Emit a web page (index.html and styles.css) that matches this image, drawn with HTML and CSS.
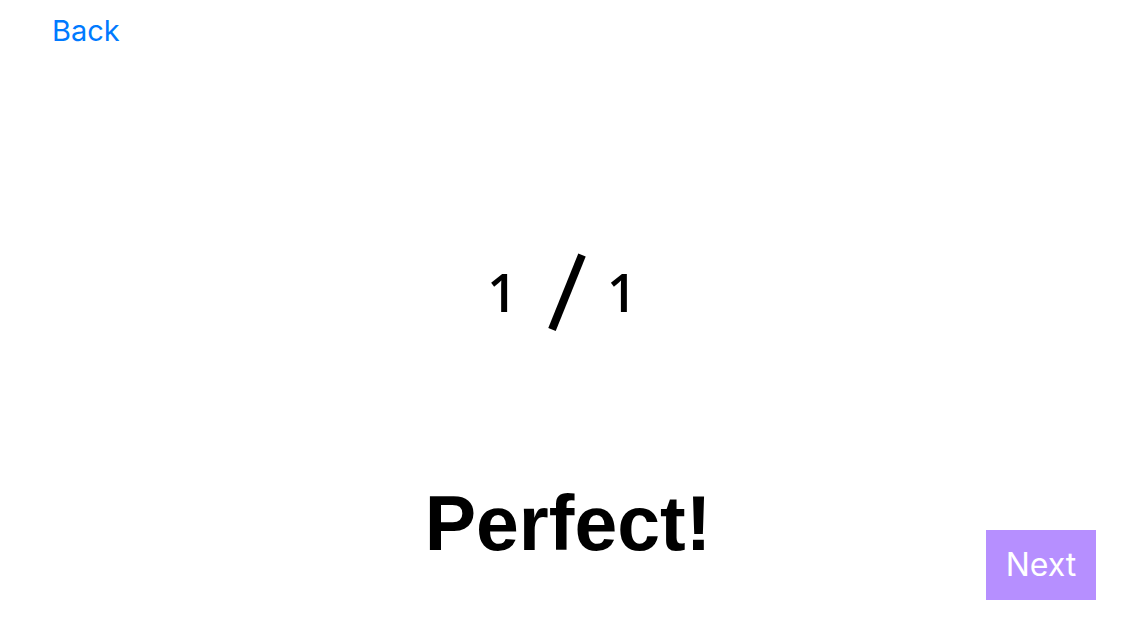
FILE: index.html
```html
<!DOCTYPE html>
<html lang="en">
<head>
<meta charset="utf-8">
<title>Result</title>
<link rel="stylesheet" href="styles.css">
</head>
<body>
<header class="bar"><button class="back" type="button">Back</button></header>
<main class="result">
<p class="score">
<span class="count">1</span>
<svg class="slash" viewBox="0 0 50 78" aria-hidden="true"><path d="M15 76.500 45 2" stroke="#000" stroke-width="8"/></svg>
<span class="count">1</span>
</p>
<h1 class="verdict">Perfect!</h1>
</main>
<footer class="actions"><button class="next" type="button">Next</button></footer>
</body>
</html>
```
FILE: styles.css
```css
* { box-sizing: border-box; }
body {
  margin: 0;
  min-height: 100vh;
  display: grid;
  grid-template-rows: auto 1fr auto;
  background: #fff;
  color: #000;
  font-family: Inter, "Liberation Sans", sans-serif;
}
button { border: 0; font-family: inherit; cursor: pointer; }
.bar { padding: 13px 52px; }
.back {
  padding: 0;
  background: none;
  color: #007aff;
  font-size: 29px;
  line-height: 36px;
}
.result {
  display: flex;
  flex-direction: column;
  align-items: center;
  justify-content: flex-end;
}
.score {
  display: flex;
  align-items: center;
  gap: 20px;
  margin: 0 12px 148px 0;
}
.count {
  font-family: "Open Sans", sans-serif;
  font-weight: 600;
  font-size: 52px;
  line-height: 60px;
}
.slash { width: 50px; height: 78px; }
.verdict {
  margin: 0;
  font-family: "Liberation Sans", sans-serif;
  font-size: 77px;
  line-height: 88px;
}
.actions {
  display: flex;
  justify-content: flex-end;
  padding: 0 40px 40px;
  margin-top: -37px;
}
.next {
  width: 110px;
  padding: 0;
  background: #b68fff;
  color: #fff;
  font-size: 32px;
  line-height: 70px;
}
```
